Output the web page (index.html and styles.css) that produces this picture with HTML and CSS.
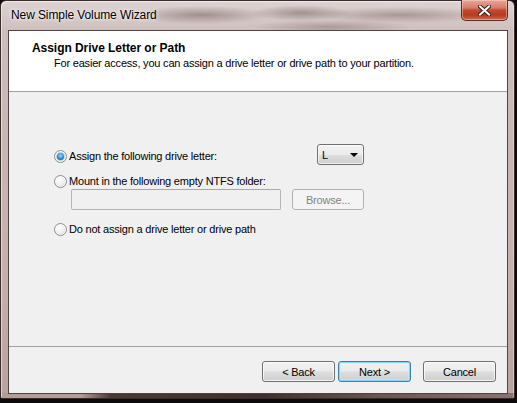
FILE: index.html
```html
<!DOCTYPE html>
<html>
<head>
<meta charset="utf-8">
<link rel="stylesheet" href="styles.css">
</head>
<body>
<div class="window">
  <div class="titlebar">
    <span class="title">New Simple Volume Wizard</span>
    <div class="close">
      <svg width="13" height="11" viewBox="0 0 13 11">
        <path d="M2 1.5 L11 9.5 M11 1.5 L2 9.5" stroke="#3a2222" stroke-width="4" stroke-linecap="square"/>
        <path d="M2 1.5 L11 9.5 M11 1.5 L2 9.5" stroke="#ffffff" stroke-width="2" stroke-linecap="square"/>
      </svg>
    </div>
  </div>
  <div class="client">
    <div class="header">
      <div class="h-title">Assign Drive Letter or Path</div>
      <div class="h-sub">For easier access, you can assign a drive letter or drive path to your partition.</div>
    </div>
    <div class="body">
      <div class="row row1">
        <label class="opt"><span class="radio checked"></span><span>Assign the following drive letter:</span></label>
        <div class="combo"><span>L</span><span class="arrow"></span></div>
      </div>
      <div class="row row2">
        <label class="opt"><span class="radio"></span><span>Mount in the following empty NTFS folder:</span></label>
      </div>
      <div class="row fieldrow">
        <div class="field"></div>
        <div class="btn disabled browse">Browse...</div>
      </div>
      <div class="row row3">
        <label class="opt"><span class="radio"></span><span>Do not assign a drive letter or drive path</span></label>
      </div>
    </div>
    <div class="footer">
      <div class="btn">&lt; Back</div>
      <div class="btn default">Next &gt;</div>
      <div class="btn cancel">Cancel</div>
    </div>
  </div>
</div>
</body>
</html>
```

FILE: styles.css
```css
html, body {
  margin: 0;
  padding: 0;
}
body {
  width: 517px;
  height: 403px;
  background: #0c0a0a;
  font-family: "Liberation Sans", Arial, sans-serif;
  overflow: hidden;
}
.window {
  box-sizing: border-box;
  width: 515px;
  height: 399px;
  border: 1px solid #3a2c2b;
  border-radius: 6px 6px 2px 2px;
  display: flex;
  flex-direction: column;
  background:
    linear-gradient(90deg, #b49c98 0px, #b49c98 80px, #4a3836 110px, #3e302e 260px, #6a5654 380px, #8a7472 515px) bottom / 100% 5px no-repeat,
    radial-gradient(ellipse 70px 9px at 200px 14px, rgba(120,95,92,.55), rgba(120,95,92,0)),
    radial-gradient(ellipse 50px 8px at 300px 12px, rgba(110,85,82,.5), rgba(110,85,82,0)),
    radial-gradient(ellipse 90px 8px at 400px 14px, rgba(130,100,96,.5), rgba(130,100,96,0)),
    radial-gradient(ellipse 80px 7px at 330px 26px, rgba(120,95,92,.4), rgba(120,95,92,0)),
    linear-gradient(180deg, #dcd3d2 0px, #cdbfbd 30px, #c9b7b3 120px, #c4aeaa 300px, #b9a19d 399px);
  box-shadow: inset 1px 1px 0 rgba(255,255,255,.55), inset -1px 0 0 rgba(255,255,255,.35);
}
.titlebar {
  height: 29px;
  flex: none;
  display: flex;
  align-items: flex-start;
}
.title {
  margin: 7px 0 0 10px;
  font-size: 12px;
  line-height: 15px;
  letter-spacing: -0.1px;
  color: #000;
  text-shadow: 0 0 6px rgba(255,255,255,.9), 0 0 3px rgba(255,255,255,.9);
}
.close {
  margin: -1px 6px 0 auto;
  width: 47px;
  height: 21px;
  box-sizing: border-box;
  border: 1px solid #5a2a24;
  border-top: none;
  border-radius: 0 0 5px 5px;
  background: linear-gradient(180deg, #e9a899 0%, #d67a68 40%, #c04a32 50%, #b43a20 75%, #cc6a4a 100%);
  box-shadow: inset 0 0 0 1px rgba(255,220,210,.45);
  display: flex;
  align-items: center;
  justify-content: center;
}
.close svg { display: block; }
.client {
  flex: 1;
  margin: 0 6px 4px 7px;
  border: 1px solid #4e4444;
  background: #f0f0f0;
  display: flex;
  flex-direction: column;
  font-size: 11px;
  letter-spacing: -0.2px;
  color: #000;
}
.header {
  height: 60px;
  flex: none;
  background: #fff;
  border-bottom: 1px solid #a0a0a0;
  padding: 10px 0 0 23px;
  box-sizing: content-box;
}
.h-title {
  font-weight: bold;
  font-size: 12px;
  line-height: 15px;
  letter-spacing: -0.05px;
  height: 15px;
}
.h-sub {
  margin-left: 22px;
  line-height: 14px;
}
.header { height: 50px; }
.body {
  flex: 1;
  padding: 52px 0 0 45px;
  display: flex;
  flex-direction: column;
}
.row { display: flex; }
.row1 {
  display: grid;
  grid-template-columns: 263px 47px;
  align-items: start;
}
.row1 .opt { margin-top: 5px; }
.row2 { margin-top: 9px; }
.fieldrow { margin-top: 1px; padding-left: 17px; }
.row3 { margin-top: 12px; }
.opt {
  display: flex;
  align-items: center;
  line-height: 14px;
  height: 14px;
}
.radio {
  box-sizing: border-box;
  width: 13px;
  height: 13px;
  border-radius: 50%;
  border: 1px solid #8e8f8f;
  background: radial-gradient(circle at 40% 35%, #ffffff 0%, #f2f2f2 40%, #d4d4d4 100%);
  box-shadow: inset 0 0 0 1px rgba(255,255,255,.6);
  margin-right: 2px;
  display: flex;
  align-items: center;
  justify-content: center;
  flex: none;
}
.radio.checked::after {
  content: "";
  width: 7px;
  height: 7px;
  border-radius: 50%;
  background: radial-gradient(circle at 50% 40%, #9fe0ff 0%, #3a9be0 45%, #1a5a9a 80%, #184e86 100%);
  box-shadow: 0 0 0 1px #bcd4e8;
}
.combo {
  box-sizing: border-box;
  width: 47px;
  height: 21px;
  border: 1px solid #707070;
  border-radius: 3px;
  background: linear-gradient(180deg, #f2f2f2 0%, #ebebeb 50%, #dddddd 51%, #cfcfcf 100%);
  box-shadow: inset 0 0 0 1px rgba(255,255,255,.7);
  display: flex;
  align-items: center;
  padding: 0 5px 0 4px;
  font-size: 11px;
}
.combo span:first-child { flex: 1; }
.arrow {
  width: 0;
  height: 0;
  border-left: 4px solid transparent;
  border-right: 4px solid transparent;
  border-top: 4px solid #000;
}
.field {
  box-sizing: border-box;
  width: 210px;
  height: 21px;
  border: 1px solid #b5b5b5;
  border-top-color: #a8a8a8;
  background: #f0f0f0;
  border-radius: 2px;
}
.btn {
  box-sizing: border-box;
  width: 73px;
  height: 21px;
  border: 1px solid #707070;
  border-radius: 3px;
  background: linear-gradient(180deg, #f2f2f2 0%, #ebebeb 48%, #dddddd 52%, #cfcfcf 100%);
  box-shadow: inset 0 0 0 1px rgba(255,255,255,.75);
  display: flex;
  align-items: center;
  justify-content: center;
  font-size: 11px;
  line-height: 14px;
}
.browse {
  margin-left: 11px;
  width: 72px;
}
.btn.disabled {
  border-color: #adb2b5;
  background: #f4f4f4;
  box-shadow: none;
  color: #838383;
}
.btn.default {
  border-color: #3c7fb1;
  box-shadow: inset 0 0 0 1px #8fd2f5, inset 0 0 0 2px rgba(200,235,252,.5);
  margin-left: 3px;
}
.btn.cancel { margin-left: 12px; }
.footer {
  height: 46px;
  flex: none;
  border-top: 1px solid #a0a0a0;
  box-sizing: border-box;
  height: 47px;
  display: flex;
  justify-content: flex-end;
  align-items: flex-start;
  padding: 14px 11px 0 0;
}
```
